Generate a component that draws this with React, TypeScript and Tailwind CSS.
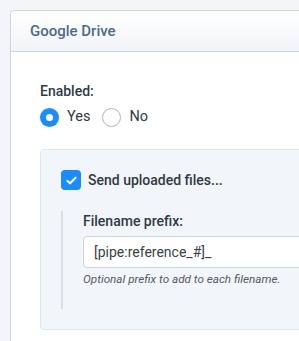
export default function App() {
  return (
    <div className="min-h-screen bg-[#f3f5f8] pt-[10px] pl-[10px] overflow-hidden font-['Roboto',sans-serif]">
      <div className="w-[420px] border border-[#c9d5e3] rounded-[4px] bg-white">
        <div className="h-[41px] bg-gradient-to-b from-white to-[#f1f4f8] border-b border-[#c9d5e3] rounded-t-[4px] pl-[19px] flex items-center">
          <h2 className="text-[15px] font-medium text-[#4b6b8e]">Google Drive</h2>
        </div>

        <div className="pl-[29px] pt-[29px] pb-[20px]">
          <div className="text-[14px] leading-[20px] font-medium text-[#2f3a45]">Enabled:</div>
          <div className="mt-[6px] flex items-center h-[20px] text-[14px] text-[#2f3a45]">
            <span className="w-[19px] h-[19px] rounded-full bg-[#1a8cff] flex items-center justify-center">
              <span className="w-[7px] h-[7px] rounded-full bg-white" />
            </span>
            <span className="ml-[8px] text-[14.5px]">Yes</span>
            <span className="ml-[12px] w-[19px] h-[19px] rounded-full border border-[#a9b6c4] bg-white" />
            <span className="ml-[8px] text-[14.5px]">No</span>
          </div>

          <div className="mt-[22px] bg-[#f2f5f9] border border-[#dfe6ee] rounded-[4px] pt-[20px] pl-[20px] pb-[20px]">
            <div className="flex items-center h-[20px]">
              <span className="w-[20px] h-[20px] rounded-[4px] bg-[#1a8cff] flex items-center justify-center">
                <svg width="13" height="13" viewBox="0 0 16 16" fill="none">
                  <path d="M3 8.5l3.2 3L13 4.5" stroke="white" strokeWidth="2.6" strokeLinecap="round" strokeLinejoin="round" />
                </svg>
              </span>
              <span className="ml-[7px] text-[14px] font-medium text-[#2f3a45]">Send uploaded files...</span>
            </div>

            <div className="mt-[21px] border-l-2 border-[#d9dee4] pl-[20px] pb-[22px]">
              <div className="text-[14px] leading-[20px] font-medium text-[#2f3a45]">Filename prefix:</div>
              <div className="mt-[5px] h-[32px] bg-white border border-[#c9d5e3] rounded-l-[4px] flex items-center pl-[10px] text-[14px] text-[#3a3f45]">
                [pipe:reference_#]_
              </div>
              <div className="mt-[3px] text-[11.7px] leading-[16px] italic text-[#555b62]">
                Optional prefix to add to each filename.
              </div>
            </div>
          </div>
        </div>
      </div>
    </div>
  );
}
